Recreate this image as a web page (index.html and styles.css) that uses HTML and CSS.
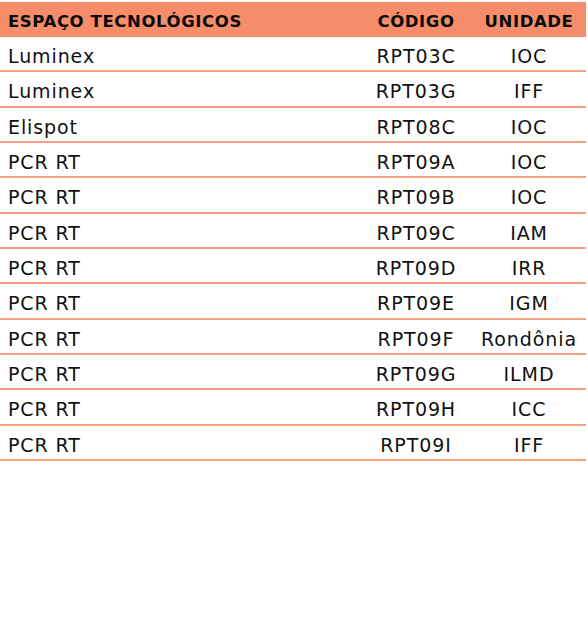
FILE: index.html
```html
<!DOCTYPE html>
<html lang="pt">
<head>
<meta charset="utf-8">
<title>Espaços Tecnológicos</title>
<link rel="stylesheet" href="styles.css">
</head>
<body>
<div class="table">
  <div class="row head">
    <div class="c1">ESPAÇO TECNOLÓGICOS</div>
    <div class="c2">CÓDIGO</div>
    <div class="c3">UNIDADE</div>
  </div>
  <div class="row"><div class="c1">Luminex</div><div class="c2">RPT03C</div><div class="c3">IOC</div></div>
  <div class="row"><div class="c1">Luminex</div><div class="c2">RPT03G</div><div class="c3">IFF</div></div>
  <div class="row"><div class="c1">Elispot</div><div class="c2">RPT08C</div><div class="c3">IOC</div></div>
  <div class="row"><div class="c1">PCR RT</div><div class="c2">RPT09A</div><div class="c3">IOC</div></div>
  <div class="row"><div class="c1">PCR RT</div><div class="c2">RPT09B</div><div class="c3">IOC</div></div>
  <div class="row"><div class="c1">PCR RT</div><div class="c2">RPT09C</div><div class="c3">IAM</div></div>
  <div class="row"><div class="c1">PCR RT</div><div class="c2">RPT09D</div><div class="c3">IRR</div></div>
  <div class="row"><div class="c1">PCR RT</div><div class="c2">RPT09E</div><div class="c3">IGM</div></div>
  <div class="row"><div class="c1">PCR RT</div><div class="c2">RPT09F</div><div class="c3">Rondônia</div></div>
  <div class="row"><div class="c1">PCR RT</div><div class="c2">RPT09G</div><div class="c3">ILMD</div></div>
  <div class="row"><div class="c1">PCR RT</div><div class="c2">RPT09H</div><div class="c3">ICC</div></div>
  <div class="row"><div class="c1">PCR RT</div><div class="c2">RPT09I</div><div class="c3">IFF</div></div>
</div>
</body>
</html>
```
FILE: styles.css
```css
html, body {
  margin: 0;
  padding: 0;
  background: #ffffff;
}
body {
  padding-top: 2px;
  font-family: "DejaVu Sans", sans-serif;
  color: #111111;
}
.table {
  width: 586px;
}
.row {
  display: grid;
  grid-template-columns: 360px 112px 1fr;
  align-items: center;
  height: 35.33px;
  box-sizing: border-box;
  padding-top: 5px;
  border-bottom: 2px solid #f5a083;
  font-size: 19px;
  letter-spacing: 0.9px;
}
.row.head {
  height: 35px;
  padding-top: 3px;
  background: #f58d6b;
  border-bottom: none;
  font-weight: bold;
  font-size: 16.5px;
  letter-spacing: 0.6px;
  color: #0a0a0a;
}
.c1 {
  padding-left: 8px;
  white-space: nowrap;
}
.c2, .c3 {
  text-align: center;
  white-space: nowrap;
}
```
